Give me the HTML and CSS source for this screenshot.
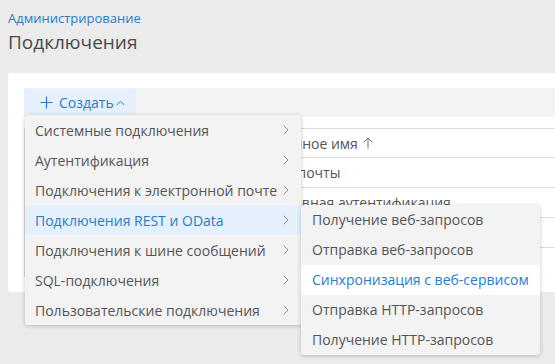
FILE: index.html
```html
<!DOCTYPE html>
<html lang="ru">
<head>
<meta charset="utf-8">
<link rel="stylesheet" href="styles.css">
</head>
<body>
<div class="page-header">
  <a class="breadcrumb" href="#">Администрирование</a>
  <h1 class="title">Подключения</h1>
</div>
<div class="card">
  <div class="toolbar">
    <div class="create-wrap">
      <button class="create-btn">
        <svg class="plus" width="13" height="13" viewBox="0 0 13 13"><path d="M6.5 0.5v12M0.5 6.5h12" stroke="#2a7bc4" stroke-width="1.2" fill="none"/></svg>
        <span>Создать</span>
        <svg class="caret" width="9" height="6" viewBox="0 0 9 6"><path d="M0.7 5L4.5 1.3 8.3 5" stroke="#2a7bc4" stroke-width="1" fill="none"/></svg>
      </button>
      <ul class="menu">
        <li class="menu-item"><span>Системные подключения</span><svg class="chev" width="6" height="10" viewBox="0 0 6 10"><path d="M0.8 0.8L5 5 0.8 9.2" stroke="#8a8a8a" stroke-width="1" fill="none"/></svg></li>
        <li class="menu-item"><span>Аутентификация</span><svg class="chev" width="6" height="10" viewBox="0 0 6 10"><path d="M0.8 0.8L5 5 0.8 9.2" stroke="#8a8a8a" stroke-width="1" fill="none"/></svg></li>
        <li class="menu-item"><span>Подключения к электронной почте</span><svg class="chev" width="6" height="10" viewBox="0 0 6 10"><path d="M0.8 0.8L5 5 0.8 9.2" stroke="#8a8a8a" stroke-width="1" fill="none"/></svg></li>
        <li class="menu-item active"><span>Подключения REST и OData</span><svg class="chev" width="6" height="10" viewBox="0 0 6 10"><path d="M0.8 0.8L5 5 0.8 9.2" stroke="#8a8a8a" stroke-width="1" fill="none"/></svg>
          <ul class="submenu">
            <li class="sub-item">Получение веб-запросов</li>
            <li class="sub-item">Отправка веб-запросов</li>
            <li class="sub-item hover">Синхронизация с веб-сервисом</li>
            <li class="sub-item">Отправка HTTP-запросов</li>
            <li class="sub-item">Получение HTTP-запросов</li>
          </ul>
        </li>
        <li class="menu-item"><span>Подключения к шине сообщений</span><svg class="chev" width="6" height="10" viewBox="0 0 6 10"><path d="M0.8 0.8L5 5 0.8 9.2" stroke="#8a8a8a" stroke-width="1" fill="none"/></svg></li>
        <li class="menu-item"><span>SQL-подключения</span><svg class="chev" width="6" height="10" viewBox="0 0 6 10"><path d="M0.8 0.8L5 5 0.8 9.2" stroke="#8a8a8a" stroke-width="1" fill="none"/></svg></li>
        <li class="menu-item"><span>Пользовательские подключения</span><svg class="chev" width="6" height="10" viewBox="0 0 6 10"><path d="M0.8 0.8L5 5 0.8 9.2" stroke="#8a8a8a" stroke-width="1" fill="none"/></svg></li>
      </ul>
    </div>
  </div>
  <div class="table">
    <div class="row head"><div class="c1">Имя</div><div class="c2 sort">Системное имя <svg class="arrow" width="10" height="12" viewBox="0 0 10 12"><path d="M5 11.5V1M0.8 5.2L5 1l4.2 4.2" stroke="#777" stroke-width="1" fill="none"/></svg></div></div>
    <div class="row"><div class="c1">Почта</div><div class="c2">Шлюз почты</div></div>
    <div class="row"><div class="c1">Аутентификация</div><div class="c2">Адаптивная аутентификация</div></div>
    <div class="row"><div class="c1">Веб-запросы</div><div class="c2">Получение веб-запросов</div></div>
    <div class="row"><div class="c1">Веб-сервис</div><div class="c2">Синхронизация</div></div>
  </div>
</div>
</body>
</html>
```

FILE: styles.css
```css
html, body {
  margin: 0;
  padding: 0;
  height: 100%;
  overflow: hidden;
}
body {
  background: #ebebeb;
  font-family: "Open Sans", "Noto Sans", sans-serif;
  color: #555;
}
.page-header {
  padding: 8px 8px 0;
}
.breadcrumb {
  display: block;
  font-size: 13px;
  line-height: 20px;
  color: #2a7bc4;
  text-decoration: none;
}
.title {
  margin: 0;
  font-size: 19px;
  font-weight: normal;
  line-height: 26px;
  color: #4a4a4a;
  margin-top: 1px;
}
.card {
  margin: 18px 0 0 8px;
  width: 620px;
  background: #fff;
  border-radius: 3px;
  padding: 15px 0 15px 16px;
  box-sizing: border-box;
}
.toolbar {
  background: #f3f3f3;
  height: 29px;
  box-sizing: border-box;
  padding-top: 1px;
}
.create-wrap {
  position: relative;
  display: inline-block;
}
.create-btn {
  display: flex;
  align-items: center;
  height: 26px;
  width: 112px;
  border: none;
  background: #e4f1fc;
  border-radius: 2px;
  padding: 0 0 0 16px;
  font-family: inherit;
  font-size: 14px;
  color: #2a7bc4;
  cursor: pointer;
}
.create-btn .plus {
  margin-right: 6px;
}
.create-btn .caret {
  margin-left: 2px;
  margin-top: 2px;
}
.menu {
  position: absolute;
  left: 1px;
  top: 26px;
  width: 276px;
  margin: 0;
  padding: 0;
  list-style: none;
  background: #f3f3f3;
  border-radius: 3px;
  box-shadow: 0 1px 4px rgba(0,0,0,0.22);
  z-index: 10;
}
.menu-item {
  position: relative;
  display: flex;
  align-items: center;
  justify-content: space-between;
  height: 30px;
  padding: 0 12px 0 10px;
  font-size: 14px;
  color: #555;
  white-space: nowrap;
}
.menu-item.active {
  background: #e4f1fc;
  color: #2a7bc4;
}
.submenu {
  position: absolute;
  left: 100%;
  top: 0;
  width: 239px;
  margin: 0;
  padding: 0;
  list-style: none;
  background: #f3f3f3;
  border-radius: 3px;
  box-shadow: 0 1px 4px rgba(0,0,0,0.22);
  z-index: 11;
  overflow: hidden;
}
.sub-item {
  height: 30px;
  line-height: 30px;
  padding-left: 11px;
  font-size: 14px;
  color: #555;
  white-space: nowrap;
}
.sub-item.hover {
  background: #fff;
  color: #2a7bc4;
}
.table {
  margin-top: 11px;
  border-left: 1px solid #dcdcdc;
  font-size: 14px;
  color: #555;
}
.row {
  display: flex;
  height: 30px;
  align-items: center;
  border-top: 1px solid #dcdcdc;
  box-sizing: border-box;
}
.row.head {
  height: 29px;
}
.c1 {
  width: 179px;
  padding-left: 10px;
}
.c2 {
  flex: 1;
  padding-left: 39px;
}
.sort {
  display: flex;
  align-items: center;
}
.arrow {
  margin-left: 5px;
}
```
